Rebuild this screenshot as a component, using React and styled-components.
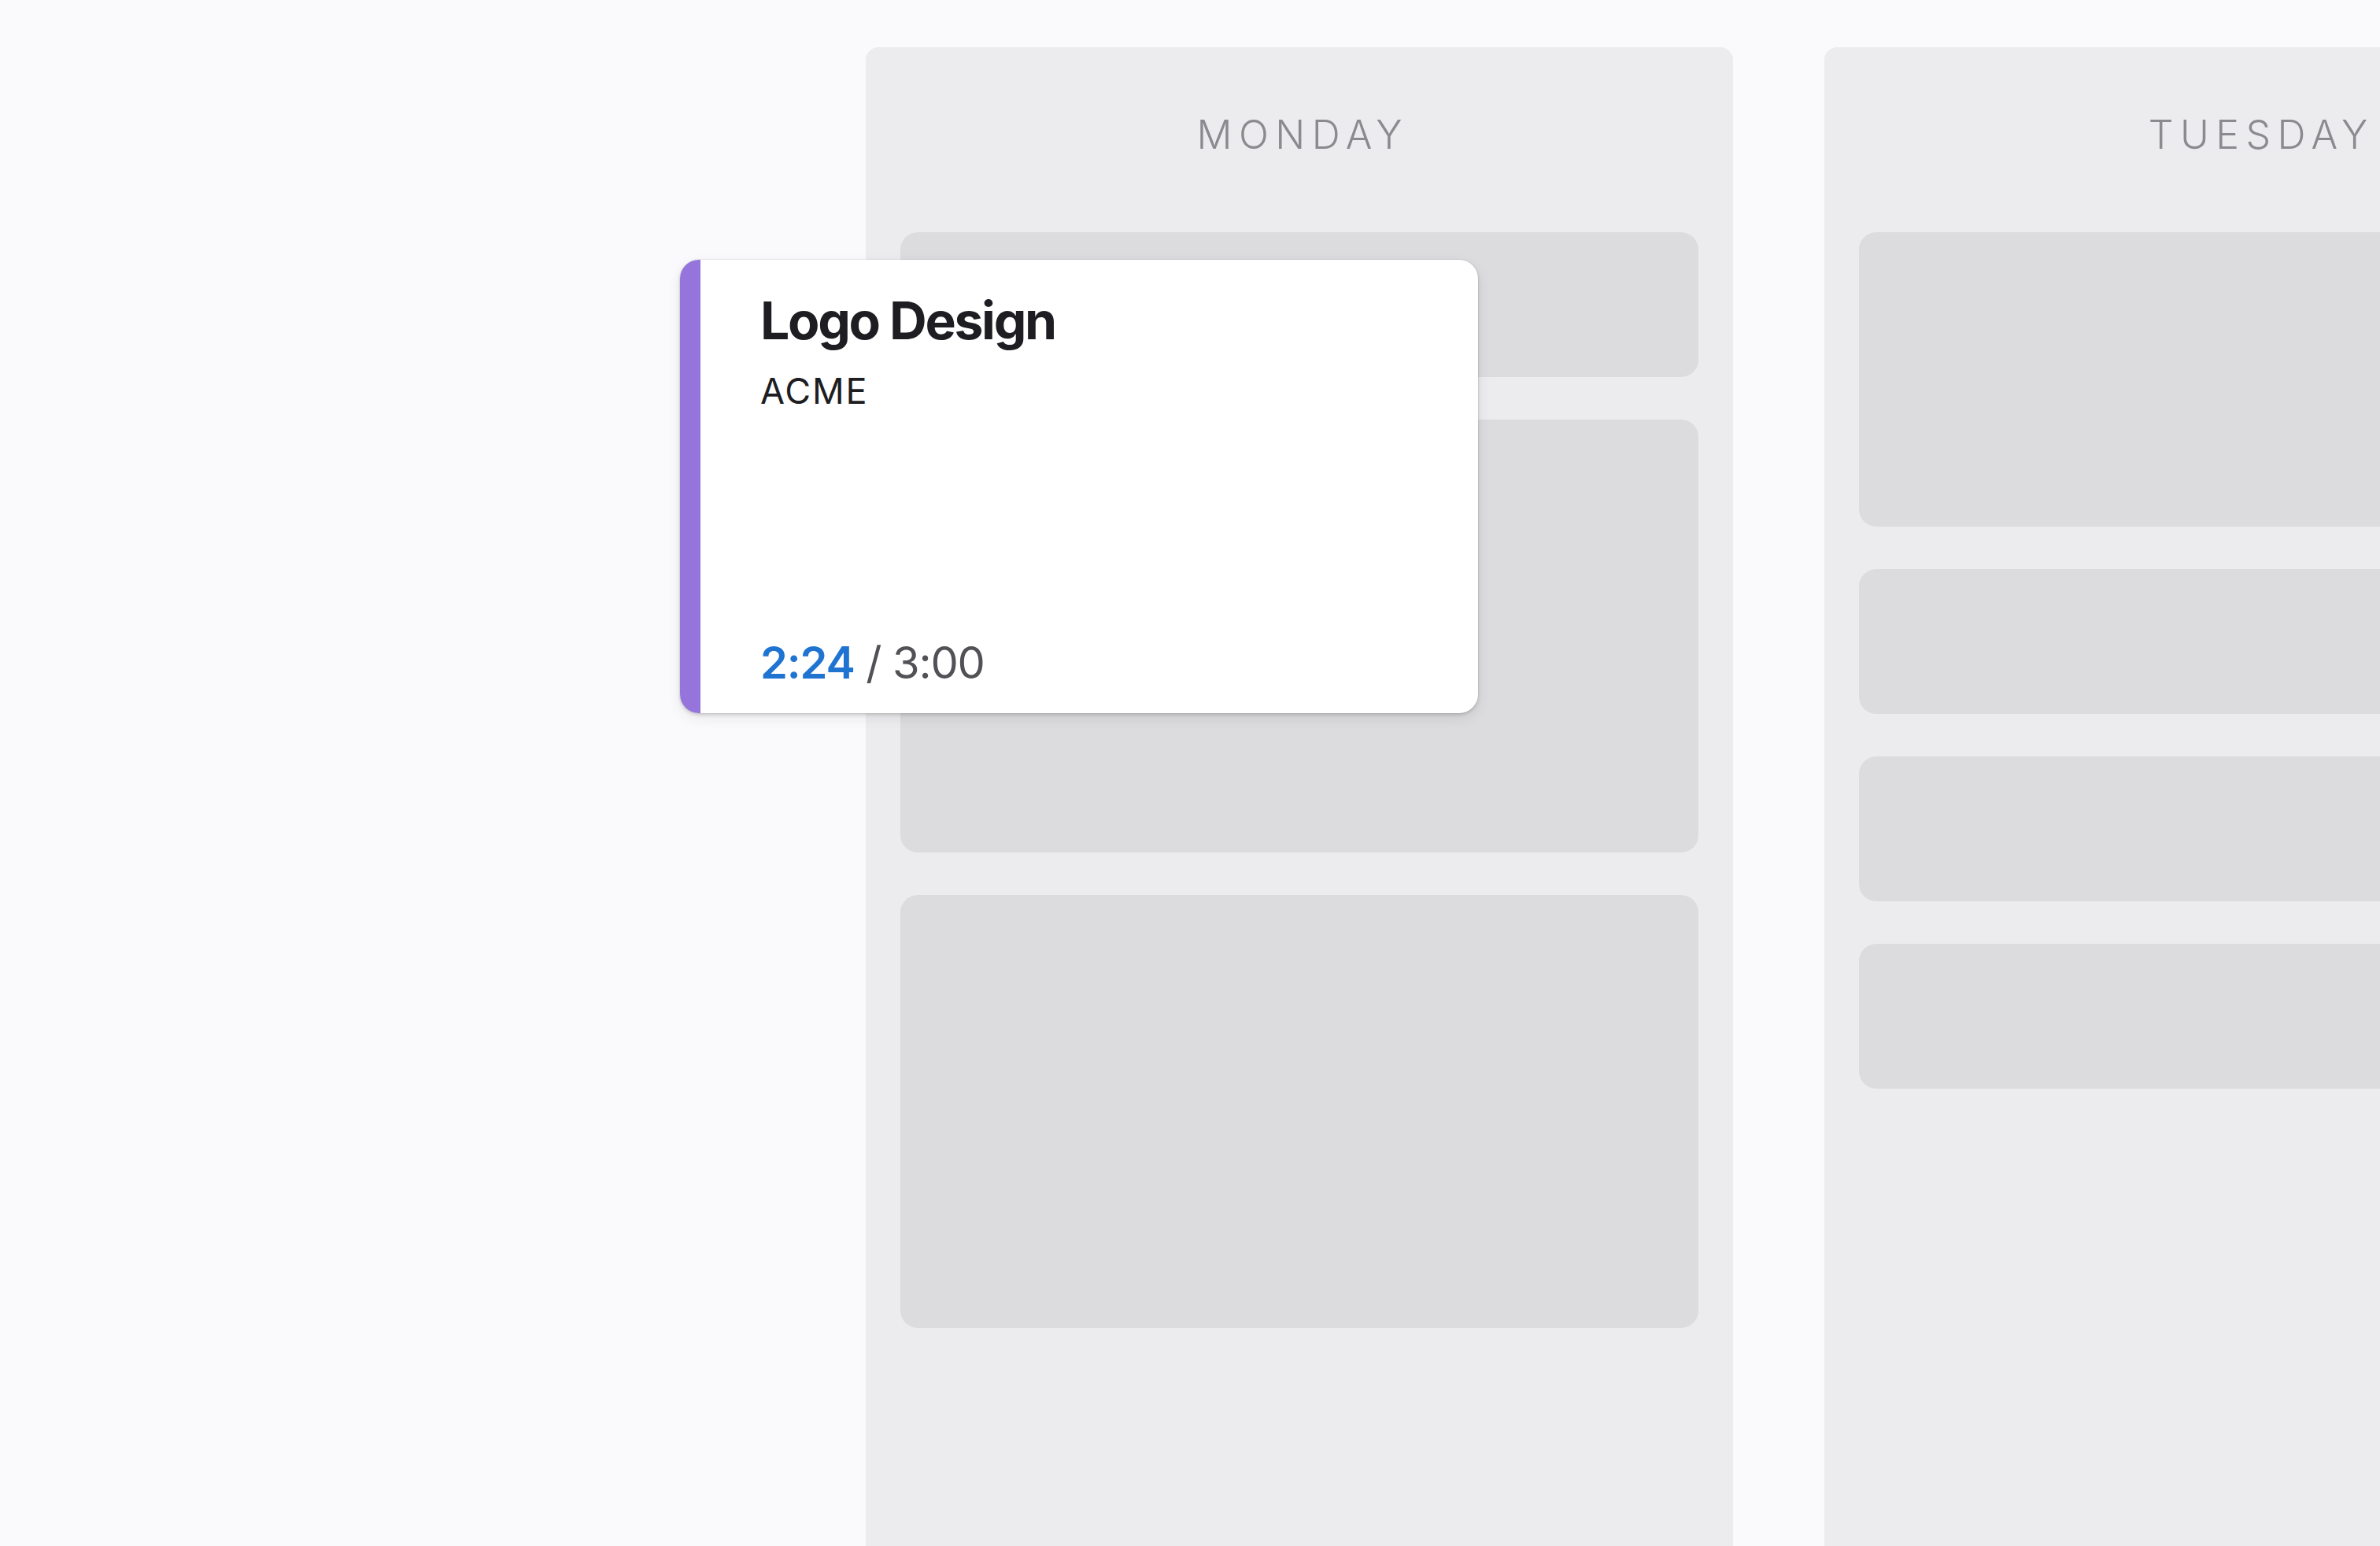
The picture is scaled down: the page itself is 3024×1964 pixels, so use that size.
import React from "react";
import styled, { createGlobalStyle } from "styled-components";

const GlobalStyle = createGlobalStyle`
  html, body {
    margin: 0;
    padding: 0;
    background: #fafafc;
    overflow: hidden;
    font-family: Inter, "Noto Sans", "Liberation Sans", sans-serif;
  }
  * { box-sizing: border-box; }
`;

const Page = styled.div`
  position: relative;
  width: 3024px;
  height: 1964px;
  overflow: hidden;
`;

const Board = styled.div`
  display: flex;
  gap: 116px;
  padding: 60px 0 0 1100px;
  height: 100%;
`;

const Column = styled.section`
  flex: 0 0 1102px;
  background: #ececee;
  border-radius: 16px 16px 0 0;
  padding: 0 44px;
  display: flex;
  flex-direction: column;
`;

const DayHeader = styled.h2`
  margin: 0;
  padding: 86px 0 99px;
  font-size: 50px;
  line-height: 50px;
  font-weight: 300;
  letter-spacing: 0.17em;
  text-indent: 0.17em;
  color: #8a8a8f;
  text-align: center;
  white-space: nowrap;
`;

const Slots = styled.div`
  display: flex;
  flex-direction: column;
  gap: 54px;
`;

const Slot = styled.div`
  height: ${(p) => p.$h}px;
  border-radius: 22px;
  background: #dcdcde;
`;

const DragCard = styled.article`
  position: absolute;
  left: 864px;
  top: 330px;
  width: 1014px;
  height: 576px;
  border-radius: 24px;
  background: #ffffff;
  overflow: hidden;
  display: flex;
  box-shadow: 0 0 0 1px rgba(0, 0, 0, 0.04), 0 2px 4px rgba(0, 0, 0, 0.16),
    0 6px 18px rgba(0, 0, 0, 0.08);
`;

const Stripe = styled.div`
  flex: 0 0 26px;
  background: ${(p) => p.$color};
`;

const CardBody = styled.div`
  flex: 1;
  display: flex;
  flex-direction: column;
  padding: 44px 0 36px 76px;
`;

const Title = styled.h3`
  margin: 0;
  font-size: 66px;
  line-height: 66px;
  font-weight: 700;
  letter-spacing: -0.035em;
  color: #1d1d22;
`;

const Client = styled.div`
  margin-top: 34px;
  font-size: 45px;
  line-height: 45px;
  font-weight: 400;
  letter-spacing: 0.04em;
  color: #1d1d22;
`;

const Time = styled.div`
  margin-top: auto;
  font-size: 56px;
  line-height: 56px;
  letter-spacing: -0.02em;
  color: #515156;
`;

const Elapsed = styled.span`
  font-weight: 600;
  color: #1f74d1;
`;

const days = [
  { name: "MONDAY", slots: [184, 550, 550] },
  { name: "TUESDAY", slots: [374, 184, 184, 184] },
];

export default function App() {
  return (
    <Page>
      <GlobalStyle />
      <Board>
        {days.map((d) => (
          <Column key={d.name}>
            <DayHeader>{d.name}</DayHeader>
            <Slots>
              {d.slots.map((h, i) => (
                <Slot key={i} $h={h} />
              ))}
            </Slots>
          </Column>
        ))}
      </Board>
      <DragCard>
        <Stripe $color="#9575db" />
        <CardBody>
          <Title>Logo Design</Title>
          <Client>ACME</Client>
          <Time>
            <Elapsed>2:24</Elapsed> / 3:00
          </Time>
        </CardBody>
      </DragCard>
    </Page>
  );
}
